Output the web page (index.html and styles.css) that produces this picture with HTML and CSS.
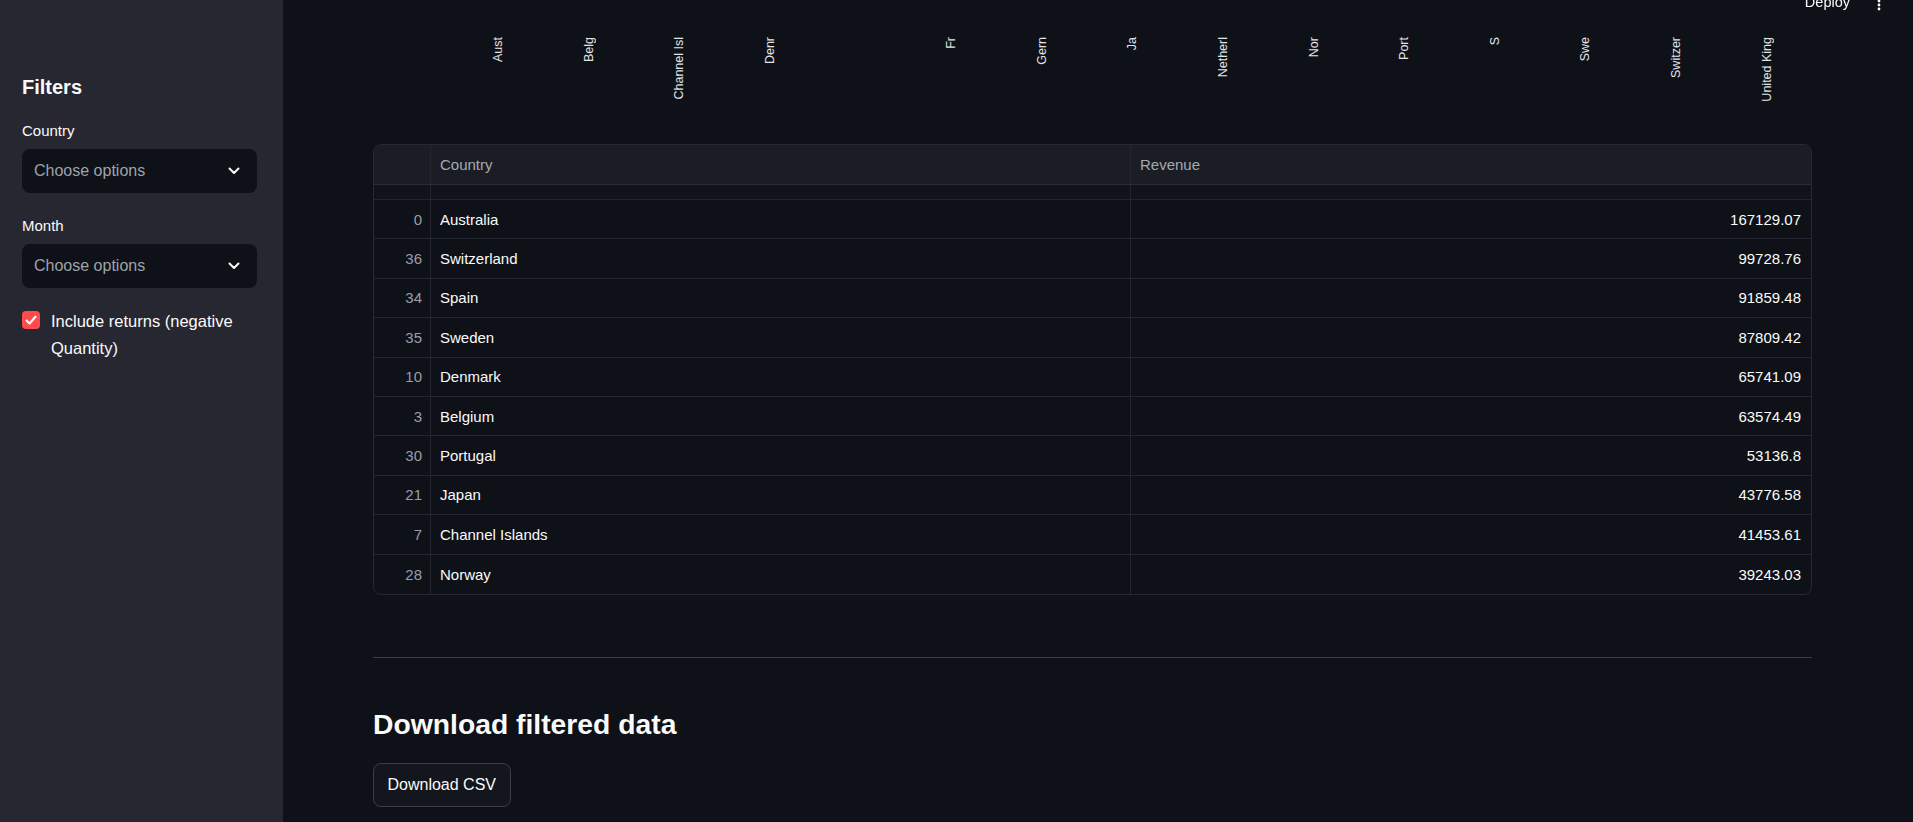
FILE: index.html
```html
<!DOCTYPE html>
<html lang="en">
<head>
<meta charset="utf-8">
<title>Dashboard</title>
<link rel="stylesheet" href="styles.css">
</head>
<body>
<div class="app">
  <aside class="sidebar">
    <h2 class="sb-title">Filters</h2>
    <div class="field">
      <label class="field-label">Country</label>
      <div class="select">
        <span class="placeholder">Choose options</span>
        <svg class="chevron" width="12" height="8" viewBox="0 0 12 8"><polyline points="1.5,1.5 6,6 10.5,1.5" fill="none" stroke="#fafafa" stroke-width="2" stroke-linecap="round" stroke-linejoin="round"/></svg>
      </div>
    </div>
    <div class="field">
      <label class="field-label">Month</label>
      <div class="select">
        <span class="placeholder">Choose options</span>
        <svg class="chevron" width="12" height="8" viewBox="0 0 12 8"><polyline points="1.5,1.5 6,6 10.5,1.5" fill="none" stroke="#fafafa" stroke-width="2" stroke-linecap="round" stroke-linejoin="round"/></svg>
      </div>
    </div>
    <label class="check">
      <span class="check-box"><svg width="18" height="18" viewBox="0 0 18 18"><polyline points="4.5,9.5 7.5,12.5 13.5,5.8" fill="none" stroke="#ffffff" stroke-width="2.2" stroke-linecap="round" stroke-linejoin="round"/></svg></span>
      <span class="check-text">Include returns (negative Quantity)</span>
    </label>
  </aside>

  <main class="main">
    <header class="topbar">
      <span class="deploy">Deploy</span>
      <svg class="menu-dots" width="12" height="12" viewBox="0 0 12 12"><circle cx="6" cy="2" r="1.4"/><circle cx="6" cy="6" r="1.4"/><circle cx="6" cy="10" r="1.4"/></svg>
    </header>

    <div class="axis">
      <span class="tick">Aust</span>
      <span class="tick">Belg</span>
      <span class="tick">Channel Isl</span>
      <span class="tick">Denr</span>
      <span class="tick"></span>
      <span class="tick">Fr</span>
      <span class="tick">Gern</span>
      <span class="tick">Ja</span>
      <span class="tick">Netherl</span>
      <span class="tick">Nor</span>
      <span class="tick">Port</span>
      <span class="tick">S</span>
      <span class="tick">Swe</span>
      <span class="tick">Switzer</span>
      <span class="tick">United King</span>
    </div>

    <div class="grid">
      <div class="row head">
        <div class="cell idx"></div>
        <div class="cell">Country</div>
        <div class="cell">Revenue</div>
      </div>
      <div class="row strip">
        <div class="cell idx"></div>
        <div class="cell"></div>
        <div class="cell"></div>
      </div>
      <div class="row"><div class="cell idx">0</div><div class="cell">Australia</div><div class="cell num">167129.07</div></div>
      <div class="row"><div class="cell idx">36</div><div class="cell">Switzerland</div><div class="cell num">99728.76</div></div>
      <div class="row"><div class="cell idx">34</div><div class="cell">Spain</div><div class="cell num">91859.48</div></div>
      <div class="row"><div class="cell idx">35</div><div class="cell">Sweden</div><div class="cell num">87809.42</div></div>
      <div class="row"><div class="cell idx">10</div><div class="cell">Denmark</div><div class="cell num">65741.09</div></div>
      <div class="row"><div class="cell idx">3</div><div class="cell">Belgium</div><div class="cell num">63574.49</div></div>
      <div class="row"><div class="cell idx">30</div><div class="cell">Portugal</div><div class="cell num">53136.8</div></div>
      <div class="row"><div class="cell idx">21</div><div class="cell">Japan</div><div class="cell num">43776.58</div></div>
      <div class="row"><div class="cell idx">7</div><div class="cell">Channel Islands</div><div class="cell num">41453.61</div></div>
      <div class="row last"><div class="cell idx">28</div><div class="cell">Norway</div><div class="cell num">39243.03</div></div>
    </div>

    <hr class="divider">

    <h3 class="section-title">Download filtered data</h3>
    <button class="btn" type="button">Download CSV</button>
  </main>
</div>
</body>
</html>
```

FILE: styles.css
```css
* { box-sizing: border-box; }

html, body {
  margin: 0;
  padding: 0;
  height: 100%;
  background: #0e1117;
  color: #fafafa;
  font-family: "Liberation Sans", Arial, sans-serif;
}

.app {
  display: flex;
  height: 100vh;
  overflow: hidden;
}

/* ---------- Sidebar ---------- */
.sidebar {
  width: 283px;
  flex: 0 0 283px;
  background: #262730;
  padding: 75px 26px 0 22px;
}

.sb-title {
  margin: 0 0 22px;
  font-size: 20px;
  line-height: 24px;
  font-weight: 700;
}

.field { margin-bottom: 23px; }

.field-label {
  display: block;
  font-size: 15px;
  line-height: 20px;
  margin-bottom: 8px;
}

.select {
  height: 44px;
  background: #0e1117;
  border-radius: 8px;
  display: flex;
  align-items: center;
  justify-content: space-between;
  padding: 0 17px 0 12px;
}

.placeholder {
  font-size: 16px;
  color: #9fa3ac;
}

.chevron { display: block; }

.check {
  display: flex;
  gap: 11px;
  margin-top: -3px;
  font-size: 16.5px;
  line-height: 27px;
}

.check-box {
  flex: 0 0 18px;
  width: 18px;
  height: 18px;
  margin-top: 3px;
  border-radius: 4px;
  background: #ff4b4b;
}

.check-box svg { display: block; }

/* ---------- Main ---------- */
.main {
  flex: 1;
  position: relative;
  padding: 37px 101px 0 90px;
  overflow: hidden;
}

.topbar {
  position: fixed;
  top: -28px;
  left: 283px;
  right: 0;
  height: 60px;
  display: flex;
  align-items: center;
  justify-content: flex-end;
  gap: 23px;
  padding-right: 28px;
  background: transparent;
}

.deploy {
  font-size: 14.5px;
  line-height: 20px;
  color: #fafafa;
}

.menu-dots {
  display: block;
  margin-top: 5px;
  fill: #fafafa;
}

.axis {
  display: grid;
  grid-template-columns: repeat(15, 1fr);
  padding-left: 80px;
  height: 70px;
  align-items: start;
  justify-items: center;
}

.tick {
  writing-mode: vertical-rl;
  transform: rotate(180deg);
  font-size: 12.5px;
  line-height: 14px;
  white-space: nowrap;
  color: #e3e4e8;
}

/* ---------- Data grid ---------- */
.grid {
  margin-top: 37px;
  border: 1px solid #262931;
  border-radius: 8px;
  overflow: hidden;
}

.row {
  display: grid;
  grid-template-columns: 57px 700px 1fr;
  height: 39.4px;
  border-bottom: 1px solid #23262e;
  font-size: 15px;
}

.row.last { border-bottom: 0; }

.row.head {
  height: 40px;
  background: #1b1d25;
  border-bottom-color: #2a2d35;
  color: #a6a9b1;
}

.row.strip {
  height: 15px;
  background: #101319;
}

.cell {
  display: flex;
  align-items: center;
  padding: 0 9px;
  border-right: 1px solid #23262e;
  white-space: nowrap;
}

.cell:last-child { border-right: 0; }

.cell.idx {
  justify-content: flex-end;
  padding-right: 8px;
  color: #9a9ea7;
}

.cell.num {
  justify-content: flex-end;
  padding-right: 10px;
}

/* ---------- Download section ---------- */
.divider {
  border: 0;
  height: 1px;
  background: #3b3e46;
  margin: 62px 0 0;
}

.section-title {
  margin: 48px 0 0;
  font-size: 28.3px;
  line-height: 36px;
  font-weight: 700;
}

.btn {
  margin-top: 21px;
  height: 44px;
  padding: 0 13.5px;
  font-family: inherit;
  font-size: 16px;
  color: #fafafa;
  background: #13161d;
  border: 1px solid #3a3d46;
  border-radius: 8px;
}
```
